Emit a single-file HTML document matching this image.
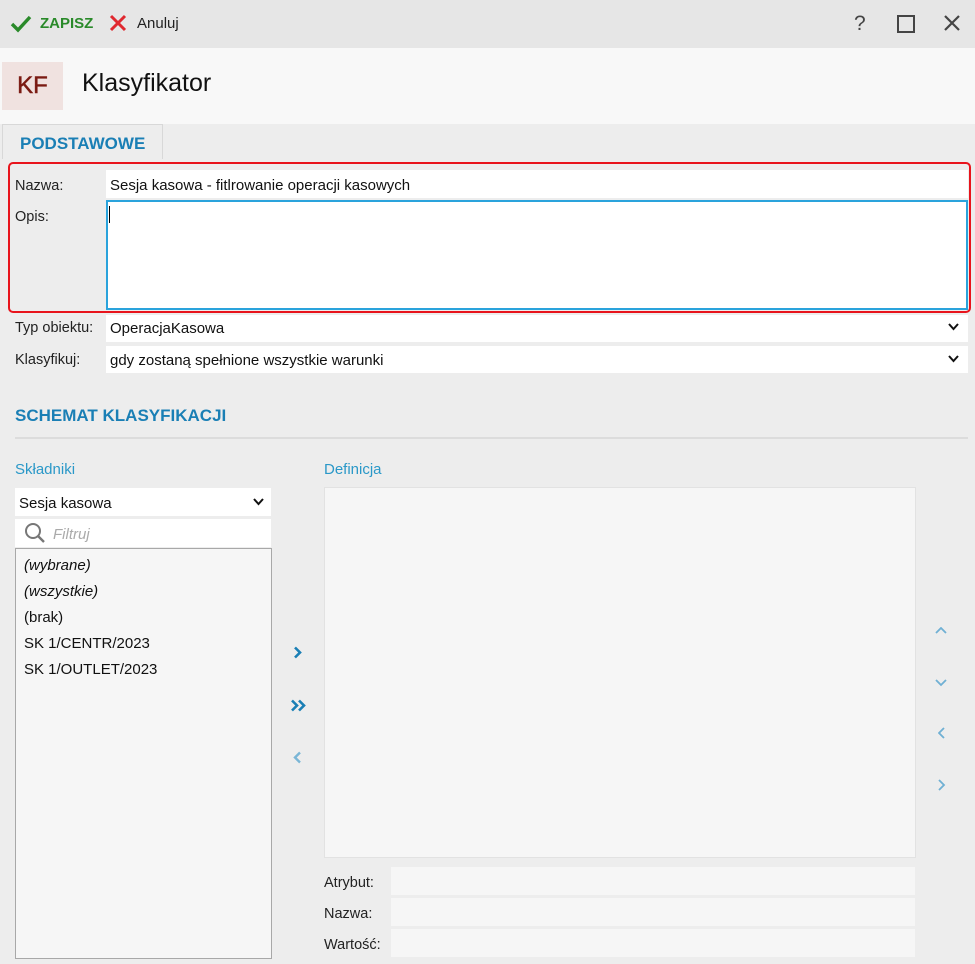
<!DOCTYPE html>
<html><head><meta charset="utf-8"><style>
*{box-sizing:border-box;margin:0;padding:0}
body{width:975px;height:964px;overflow:hidden;background:#ededed;font-family:"Liberation Sans",sans-serif;font-size:14.5px;color:#111;position:relative}
.a{position:absolute}
.inp{position:absolute;background:#fff}
.lbl{position:absolute;font-size:14.5px;color:#222}
.blue{color:#1a7fb5}
</style></head><body>
<div class="a" style="left:0;top:0;width:975px;height:48px;background:#e6e6e6"></div>
<svg class="a" style="left:10px;top:13px" width="22" height="20" viewBox="0 0 22 20"><path d="M2 11 L8 17 L20 4" stroke="#2a8a2a" stroke-width="3.4" fill="none"/></svg>
<div class="a" style="left:40px;top:15px;font-size:15px;font-weight:bold;color:#2a8a2a">ZAPISZ</div>
<svg class="a" style="left:109px;top:14px" width="18" height="18" viewBox="0 0 18 18"><path d="M2 2 L16 16 M16 2 L2 16" stroke="#e0282f" stroke-width="3" fill="none"/></svg>
<div class="a" style="left:137px;top:15px;font-size:15px;color:#222">Anuluj</div>
<div class="a" style="left:854px;top:12px;font-size:21px;color:#444">?</div>
<div class="a" style="left:897px;top:15px;width:18px;height:18px;border:2px solid #444"></div>
<svg class="a" style="left:943px;top:14px" width="18" height="18" viewBox="0 0 18 18"><path d="M2 2 L16 16 M16 2 L2 16" stroke="#444" stroke-width="2.2" fill="none"/></svg>
<div class="a" style="left:0;top:48px;width:975px;height:76px;background:#f8f8f8"></div>
<div class="a" style="left:2px;top:62px;width:61px;height:48px;background:#f0e2e0;color:#7a1a12;font-size:24px;text-align:center;line-height:47px;-webkit-text-stroke:0.5px #7a1a12">KF</div>
<div class="a" style="left:82px;top:69px;font-size:25px;color:#111">Klasyfikator</div>
<div class="a" style="left:2px;top:124px;width:161px;height:35px;background:#ededed;border:1px solid #d8d8d8;border-bottom:none"></div>
<div class="a blue" style="left:20px;top:134px;font-size:17px;font-weight:bold">PODSTAWOWE</div>
<div class="a" style="left:8px;top:162px;width:963px;height:151px;border:2px solid #e8141c;border-radius:5px"></div>
<div class="lbl" style="left:15px;top:178px">Nazwa:</div>
<div class="inp" style="left:106px;top:170px;width:862px;height:28px"></div>
<div class="a" style="left:110px;top:177px;font-size:15px">Sesja kasowa - fitlrowanie operacji kasowych</div>
<div class="lbl" style="left:15px;top:209px">Opis:</div>
<div class="inp" style="left:106px;top:200px;width:862px;height:110px;border:2px solid #2aa3dc"></div>
<div class="a" style="left:109px;top:206px;width:1px;height:17px;background:#000"></div>
<div class="lbl" style="left:15px;top:320px">Typ obiektu:</div>
<div class="inp" style="left:106px;top:315px;width:862px;height:27px"></div>
<div class="a" style="left:110px;top:320px;font-size:15px">OperacjaKasowa</div>
<div class="lbl" style="left:15px;top:352px">Klasyfikuj:</div>
<div class="inp" style="left:106px;top:346px;width:862px;height:27px"></div>
<div class="a" style="left:110px;top:352px;font-size:15px">gdy zostaną spełnione wszystkie warunki</div>
<svg class="a" style="left:948px;top:323px" width="11" height="8" viewBox="0 0 11 8"><path d="M1 1 L5.5 6 L10 1" stroke="#111" stroke-width="2" fill="none"/></svg>
<svg class="a" style="left:948px;top:355px" width="11" height="8" viewBox="0 0 11 8"><path d="M1 1 L5.5 6 L10 1" stroke="#111" stroke-width="2" fill="none"/></svg>
<div class="a blue" style="left:15px;top:406px;font-size:17px;font-weight:bold">SCHEMAT KLASYFIKACJI</div>
<div class="a" style="left:15px;top:437px;width:953px;height:2px;background:#dcdcdc"></div>
<div class="a" style="left:15px;top:461px;font-size:15px;color:#2a98c8">Składniki</div>
<div class="a" style="left:324px;top:461px;font-size:15px;color:#2a98c8">Definicja</div>
<div class="inp" style="left:15px;top:488px;width:256px;height:28px"></div>
<div class="a" style="left:19px;top:495px;font-size:15px">Sesja kasowa</div>
<svg class="a" style="left:253px;top:498px" width="11" height="8" viewBox="0 0 11 8"><path d="M1 1 L5.5 6 L10 1" stroke="#111" stroke-width="2" fill="none"/></svg>
<div class="inp" style="left:15px;top:519px;width:256px;height:28px"></div>
<svg class="a" style="left:24px;top:522px" width="22" height="22" viewBox="0 0 22 22"><circle cx="9" cy="9" r="7" stroke="#777" stroke-width="2" fill="none"/><path d="M14 14 L20 20" stroke="#777" stroke-width="2.4"/></svg>
<div class="a" style="left:53px;top:526px;font-size:15px;font-style:italic;color:#aaa">Filtruj</div>
<div class="a" style="left:15px;top:548px;width:257px;height:411px;background:#f6f6f6;border:1px solid #a8a8a8"></div>
<div class="a" style="left:24px;top:557px;font-size:15px;font-style:italic">(wybrane)</div>
<div class="a" style="left:24px;top:583px;font-size:15px;font-style:italic">(wszystkie)</div>
<div class="a" style="left:24px;top:609px;font-size:15px">(brak)</div>
<div class="a" style="left:24px;top:635px;font-size:15px">SK 1/CENTR/2023</div>
<div class="a" style="left:24px;top:661px;font-size:15px">SK 1/OUTLET/2023</div>
<svg class="a" style="left:293px;top:646px" width="9" height="13" viewBox="0 0 9 13"><path d="M2 1.5 L7 6.5 L2 11.5" stroke="#1a7fb5" stroke-width="2.6" fill="none"/></svg>
<svg class="a" style="left:290px;top:699px" width="16" height="13" viewBox="0 0 16 13"><path d="M2 1.5 L7 6.5 L2 11.5 M9 1.5 L14 6.5 L9 11.5" stroke="#1a7fb5" stroke-width="2.6" fill="none"/></svg>
<svg class="a" style="left:293px;top:751px" width="9" height="13" viewBox="0 0 9 13"><path d="M7 1.5 L2 6.5 L7 11.5" stroke="#7ab6d6" stroke-width="2.4" fill="none"/></svg>
<div class="a" style="left:324px;top:487px;width:592px;height:371px;background:#f6f6f6;border:1px solid #e2e2e2"></div>
<svg class="a" style="left:935px;top:627px" width="12" height="8"><path d="M1 6 L6 1 L11 6" stroke="#6fb0d4" stroke-width="1.8" fill="none"/></svg>
<svg class="a" style="left:935px;top:679px" width="12" height="8"><path d="M1 1 L6 6 L11 1" stroke="#6fb0d4" stroke-width="1.8" fill="none"/></svg>
<svg class="a" style="left:938px;top:727px" width="8" height="12"><path d="M6 1 L1 6 L6 11" stroke="#6fb0d4" stroke-width="1.8" fill="none"/></svg>
<svg class="a" style="left:938px;top:779px" width="8" height="12"><path d="M1 1 L6 6 L1 11" stroke="#6fb0d4" stroke-width="1.8" fill="none"/></svg>
<div class="lbl" style="left:324px;top:875px">Atrybut:</div>
<div class="lbl" style="left:324px;top:906px">Nazwa:</div>
<div class="lbl" style="left:324px;top:937px">Wartość:</div>
<div class="a" style="left:391px;top:867px;width:524px;height:28px;background:#f6f6f6"></div>
<div class="a" style="left:391px;top:898px;width:524px;height:28px;background:#f6f6f6"></div>
<div class="a" style="left:391px;top:929px;width:524px;height:28px;background:#f6f6f6"></div>
</body></html>
